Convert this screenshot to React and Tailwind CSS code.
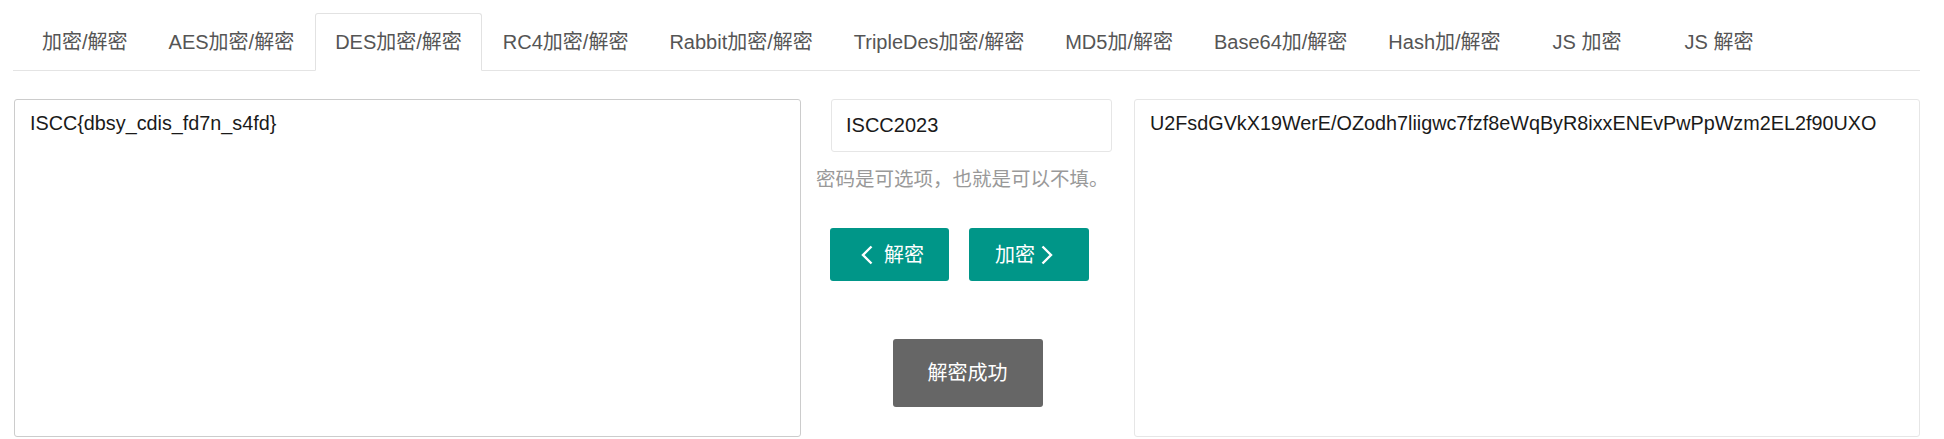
const tabs = [
  { label: '加密/解密' },
  { label: 'AES加密/解密' },
  { label: 'DES加密/解密', active: true },
  { label: 'RC4加密/解密' },
  { label: 'Rabbit加密/解密' },
  { label: 'TripleDes加密/解密' },
  { label: 'MD5加/解密' },
  { label: 'Base64加/解密' },
  { label: 'Hash加/解密' },
  { label: 'JS 加密', wide: true },
  { label: 'JS 解密', wide: true },
];

function ChevronLeft() {
  return (
    <svg width="12" height="20" viewBox="0 0 12 20" fill="none" stroke="currentColor" strokeWidth="2.4">
      <path d="M10.5 1.5 2 10l8.5 8.5" />
    </svg>
  );
}

function ChevronRight() {
  return (
    <svg width="12" height="20" viewBox="0 0 12 20" fill="none" stroke="currentColor" strokeWidth="2.4">
      <path d="M1.5 1.5 10 10l-8.5 8.5" />
    </svg>
  );
}

function Tabs() {
  return (
    <ul className="flex border-b border-[#e4e4e4] pt-[13px] pl-[9px]">
      {tabs.map((t) => (
        <li key={t.label} className="-mb-px mr-px">
          <a
            href="#"
            className={`block whitespace-pre rounded-t-[3px] border py-[14px] text-[20px] leading-[28px] text-[#555] ${
              t.wide ? 'px-[30px]' : 'px-[19px]'
            } ${t.active ? 'border-[#e2e2e2] border-b-white bg-white' : 'border-transparent'}`}
          >
            {t.label}
          </a>
        </li>
      ))}
    </ul>
  );
}

export default function App() {
  return (
    <div
      className="w-[1944px] h-[439px] overflow-hidden bg-white pl-[13px] pr-[24px]"
      style={{ fontFamily: '"Liberation Sans", "Noto Sans CJK SC", sans-serif' }}
    >
      <Tabs />

      <div className="mt-[28px] flex">
        <textarea
          readOnly
          value="ISCC{dbsy_cdis_fd7n_s4fd}"
          className="ml-px h-[338px] w-[787px] resize-none rounded-[3px] border border-[#ccc] px-[15px] pt-[9px] text-[19.8px] leading-[28px] text-[#1a1a1a] outline-none"
        />

        <div className="flex w-[333px] flex-col px-[15px]">
          <input
            readOnly
            value="ISCC2023"
            className="ml-[15px] h-[53px] w-[281px] rounded-[3px] border border-[#e6e6e6] pl-[14px] text-[20px] text-[#1a1a1a] outline-none"
          />
          <p className="mt-[13px] whitespace-nowrap text-[19.5px] leading-[28px] text-[#999]">
            密码是可选项，也就是可以不填。
          </p>
          <div className="mt-[35px] ml-[14px] flex gap-[20px]">
            <button className="flex h-[53px] w-[119px] items-center gap-[11px] rounded-[3px] bg-[#009688] pl-[31px] text-[20px] leading-[28px] text-white">
              <ChevronLeft />
              <span>解密</span>
            </button>
            <button className="flex h-[53px] w-[120px] items-center gap-[6px] rounded-[3px] bg-[#009688] pl-[26px] text-[20px] leading-[28px] text-white">
              <span>加密</span>
              <ChevronRight />
            </button>
          </div>
          <button className="mx-auto mt-[58px] flex h-[68px] w-[150px] items-center justify-center rounded-[3px] bg-[#666] text-[20px] leading-[28px] text-white">
            解密成功
          </button>
        </div>

        <textarea
          readOnly
          value="U2FsdGVkX19WerE/OZodh7liigwc7fzf8eWqByR8ixxENEvPwPpWzm2EL2f90UXO"
          className="h-[338px] flex-1 resize-none rounded-[3px] border border-[#e6e6e6] px-[15px] pt-[9px] text-[19.8px] leading-[28px] text-[#1a1a1a] outline-none"
        />
      </div>
    </div>
  );
}
